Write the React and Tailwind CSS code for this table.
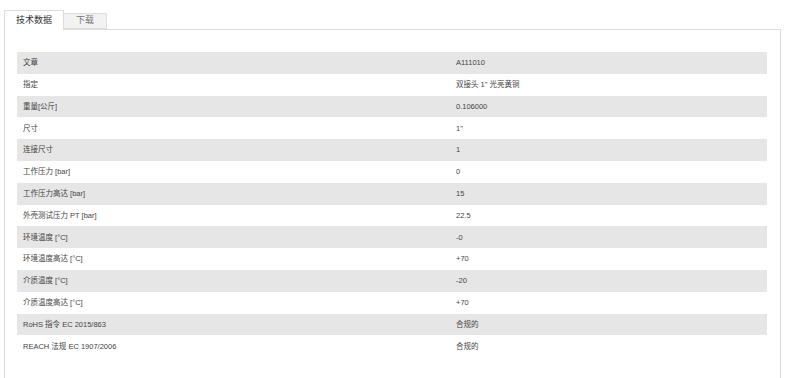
import React from 'react';

const rows = [
    ['文章', 'A111010'],
    ['指定', '双接头 1" 光亮黄铜'],
    ['重量[公斤]', '0.106000'],
    ['尺寸', '1"'],
    ['连接尺寸', '1'],
    ['工作压力 [bar]', '0'],
    ['工作压力高达 [bar]', '15'],
    ['外壳测试压力 PT [bar]', '22.5'],
    ['环境温度 [°C]', '-0'],
    ['环境温度高达 [°C]', '+70'],
    ['介质温度 [°C]', '-20'],
    ['介质温度高达 [°C]', '+70'],
    ['RoHS 指令 EC 2015/863', '合规的'],
    ['REACH 法规 EC 1907/2006', '合规的'],
];

const App = () => {
    return (
        <div className="w-[800px] h-[378px] bg-white overflow-hidden pt-[9px] pl-[4px] pr-[19px] font-['Liberation_Sans','Noto_Sans_CJK_SC',sans-serif]">
            <div className="flex items-end">
                <div className="h-[20px] w-[60px] border border-b-0 border-[#dddddd] bg-white flex items-center justify-center text-[9px] text-[#333] relative top-[1px]">
                    技术数据
                </div>
                <div className="h-[16px] w-[43px] border border-l-0 border-[#dddddd] bg-[#f2f2f2] flex items-center justify-center text-[9px] text-[#777]">
                    下载
                </div>
            </div>
            <div className="border border-[#dddddd] h-[400px] pt-[22px] pl-[12px] pr-[13px]">
                {rows.map(([label, value], i) => (
                    <div
                        key={i}
                        className={`flex items-center h-[21.8px] text-[7.5px] text-[#444] ${i % 2 === 0 ? 'bg-[#e6e6e6]' : 'bg-white'}`}
                    >
                        <div className="w-[439px] pl-[6px]">{label}</div>
                        <div className="flex-1">{value}</div>
                    </div>
                ))}
            </div>
        </div>
    );
};

export default App;
